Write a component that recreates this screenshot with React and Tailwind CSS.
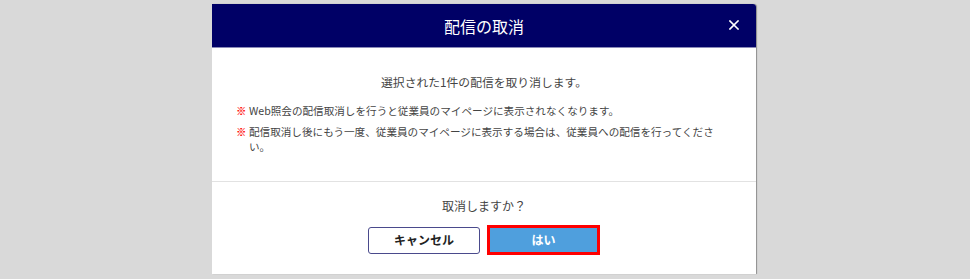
import React from "react";

export default function App() {
  return (
    <div
      className="w-[970px] h-[279px] bg-[#d9d9d9] pt-[4px] pl-[212px]"
      style={{ fontFamily: '"Noto Sans CJK JP", "Noto Sans", sans-serif' }}
    >
      <div className="w-[544px] h-[270px] bg-white shadow-[1px_0_1px_rgba(0,0,0,0.35)] rounded-tr-[3px] flex flex-col">
        <div className="relative h-[44px] bg-[#000066] border-b border-[#8a8ab8] rounded-tr-[3px] flex items-center justify-center">
          <span className="text-white text-[16px] leading-none">配信の取消</span>
          <button className="absolute right-[15px] top-[14px] w-[14px] h-[14px] flex items-center justify-center">
            <svg width="10" height="10" viewBox="0 0 10 10">
              <path d="M1 1 L9 9 M9 1 L1 9" stroke="white" strokeWidth="1.6" strokeLinecap="square" />
            </svg>
          </button>
        </div>
        <div className="border-b border-[#e2e2e2] pt-[26px] pb-[27px] px-[24px] text-[#444]">
          <p className="text-center text-[11.8px] leading-[16px]">選択された1件の配信を取り消します。</p>
          <div className="mt-[13px] flex flex-col gap-[6px] text-[10.6px] leading-[15px]">
            <div className="flex gap-[3px]">
              <span className="text-[#ff1a1a] w-[10px] shrink-0 font-black text-[10px] leading-[15px] [text-shadow:0.4px_0_0_#ff1a1a]">※</span>
              <span>Web照会の配信取消しを行うと従業員のマイページに表示されなくなります。</span>
            </div>
            <div className="flex gap-[3px]">
              <span className="text-[#ff1a1a] w-[10px] shrink-0 font-black text-[10px] leading-[15px] [text-shadow:0.4px_0_0_#ff1a1a]">※</span>
              <span className="w-[470px]">配信取消し後にもう一度、従業員のマイページに表示する場合は、従業員への配信を行ってください。</span>
            </div>
          </div>
        </div>
        <div className="flex flex-col items-center pt-[16px]">
          <p className="text-[12px] leading-[16px] text-[#444]">取消しますか？</p>
          <div className="mt-[11px] flex items-center gap-[7px]">
            <button className="w-[112px] h-[27px] border border-[#4a4a8c] rounded-[3px] bg-white text-[12px] font-bold text-[#222]">
              キャンセル
            </button>
            <div className="w-[113px] h-[30px] border-[3px] border-[#ff0000] box-border">
              <div className="w-full h-full bg-[#4f9fdd] text-white text-[12px] font-bold flex items-center justify-center">はい</div>
            </div>
          </div>
        </div>
      </div>
    </div>
  );
}
